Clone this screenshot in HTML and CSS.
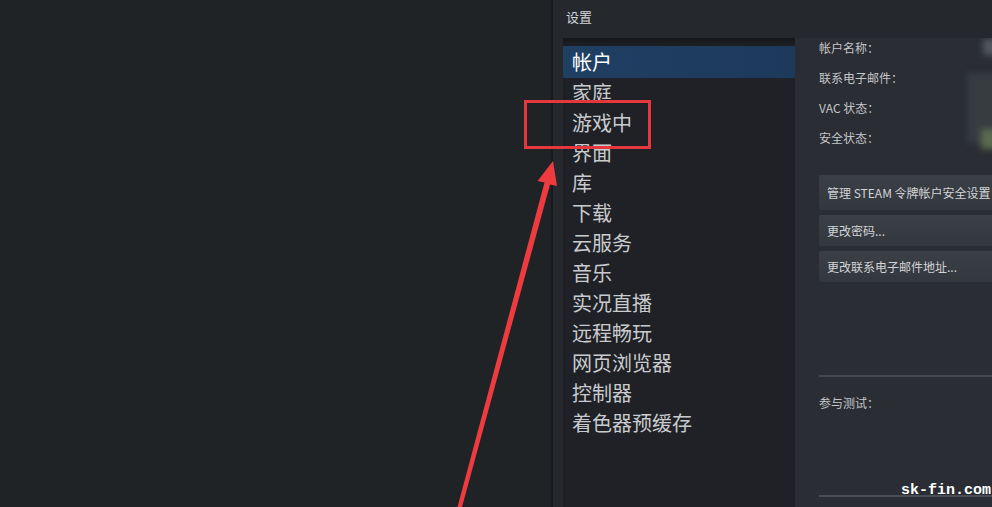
FILE: index.html
```html
<!DOCTYPE html>
<html lang="zh-CN">
<head>
    <meta charset="UTF-8">
    <meta name="viewport" content="width=device-width, initial-scale=1.0">
    <title>设置</title>
    <link rel="stylesheet" href="styles.css">
</head>
<body>
    <div class="desktop"></div>

    <div class="window">
        <div class="titlebar">设置</div>
        <div class="window-body">
            <ul class="nav">
                <li class="active">帐户</li>
                <li>家庭</li>
                <li>游戏中</li>
                <li>界面</li>
                <li>库</li>
                <li>下载</li>
                <li>云服务</li>
                <li>音乐</li>
                <li>实况直播</li>
                <li>远程畅玩</li>
                <li>网页浏览器</li>
                <li>控制器</li>
                <li>着色器预缓存</li>
            </ul>

            <div class="content">
                <div class="info">
                    <div class="info-row">帐户名称：</div>
                    <div class="info-row">联系电子邮件：</div>
                    <div class="info-row">VAC 状态：</div>
                    <div class="info-row">安全状态：</div>
                    <!-- 打码的帐户信息 -->
                    <div class="blur-values">
                        <span class="blur-a"></span>
                        <span class="blur-b"></span>
                        <span class="blur-c"></span>
                    </div>
                </div>

                <div class="buttons">
                    <button class="btn tall">管理 STEAM 令牌帐户安全设置</button>
                    <button class="btn">更改密码...</button>
                    <button class="btn">更改联系电子邮件地址...</button>
                </div>

                <div class="beta">
                    <div class="info-row">参与测试：</div>
                </div>
                <div class="bottom-line"></div>
            </div>
        </div>
    </div>

    <!-- 标注：红框和箭头 -->
    <div class="mark-box"></div>
    <svg class="mark-arrow" width="992" height="507" viewBox="0 0 992 507">
        <polygon fill="#ee3b3f" points="553,161 557,186 550,184.5 462,507 457.5,507 544.5,182.5 537.5,181"/>
    </svg>

    <div class="watermark">sk-fin.com</div>
</body>
</html>
```

FILE: styles.css
```css
* {
    margin: 0;
    padding: 0;
    box-sizing: border-box;
}

html, body {
    width: 992px;
    height: 507px;
    overflow: hidden;
}

body {
    display: flex;
    background: #202225;
    font-family: "Noto Sans CJK SC", "Noto Sans", sans-serif;
    position: relative;
}

.desktop {
    flex: 0 0 551px;
    background: #202326;
}

.window {
    flex: 1;
    display: flex;
    flex-direction: column;
    background: #25282d;
    border-left: 2px solid #17191c;
}

.titlebar {
    height: 38px;
    padding: 7px 0 0 13px;
    font-size: 13px;
    line-height: 20px;
    color: #d3d5d8;
}

.window-body {
    flex: 1;
    display: flex;
    padding-left: 10px;
}

.nav {
    list-style: none;
    width: 232px;
    background: #1f2126;
    padding-top: 8px;
    box-shadow: inset 0 8px 6px -4px #15171a;
}

.nav li {
    height: 30px;
    line-height: 30px;
    padding-left: 9px;
    font-size: 20px;
    color: #c9cbce;
}

.nav li.active {
    height: 32px;
    line-height: 32px;
    color: #ffffff;
    background: linear-gradient(90deg, #1f3f63, #1d3a5b);
}

.content {
    flex: 1;
    background: #2a2d33;
    padding: 0 0 0 24px;
    display: flex;
    flex-direction: column;
    overflow: hidden;
}

.info {
    position: relative;
    margin-top: -5px;
}

.info-row {
    height: 30px;
    line-height: 30px;
    font-size: 12px;
    color: #c4c6ca;
    white-space: nowrap;
}

.blur-values {
    position: absolute;
    left: 140px;
    top: 0;
    width: 60px;
    height: 120px;
    filter: blur(3px);
}

.blur-values span {
    display: block;
    position: absolute;
}

.blur-a {
    left: 24px;
    top: 6px;
    width: 40px;
    height: 16px;
    background: #53575e;
}

.blur-b {
    left: 8px;
    top: 40px;
    width: 50px;
    height: 70px;
    background: #373c41;
}

.blur-c {
    left: 22px;
    top: 96px;
    width: 40px;
    height: 20px;
    background: #5a6a4d;
}

.buttons {
    margin-top: 22px;
    display: flex;
    flex-direction: column;
    gap: 5px;
}

.btn {
    width: 200px;
    height: 31px;
    padding-left: 8px;
    text-align: left;
    border: none;
    border-radius: 2px;
    background: linear-gradient(180deg, #3b3f46, #33373e);
    color: #d2d4d7;
    font-family: inherit;
    font-size: 12px;
    white-space: nowrap;
    overflow: hidden;
}

.btn.tall {
    height: 35px;
}

.beta {
    margin-top: 93px;
    padding-top: 11px;
    border-top: 2px solid #44474e;
}

.bottom-line {
    margin-top: 77px;
    height: 2px;
    background: #4a4d54;
}

.mark-box {
    position: absolute;
    left: 524px;
    top: 100px;
    width: 127px;
    height: 49px;
    border: 3px solid #e5383c;
}

.mark-arrow {
    position: absolute;
    left: 0;
    top: 0;
    pointer-events: none;
}

.watermark {
    position: absolute;
    right: 1px;
    bottom: 8px;
    font-family: "Liberation Mono", monospace;
    font-size: 15px;
    font-weight: bold;
    color: #ffffff;
}
```
